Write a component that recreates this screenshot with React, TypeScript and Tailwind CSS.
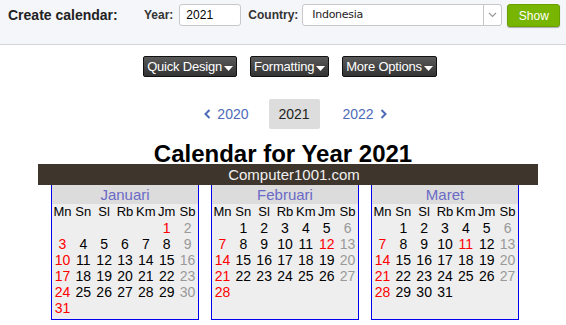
const months = [
  {
    name: "Januari",
    start: 5,
    days: 31,
    red: [1],
  },
  {
    name: "Februari",
    start: 1,
    days: 28,
    red: [12],
  },
  {
    name: "Maret",
    start: 1,
    days: 31,
    red: [11],
  },
];

const dayNames = ["Mn", "Sn", "Sl", "Rb", "Km", "Jm", "Sb"];

const Caret = () => (
  <svg width="9" height="5" viewBox="0 0 9 5" className="ml-[2px] mt-[3px]">
    <path d="M0 0 L9 0 L4.5 5 Z" fill="#ffffff" />
  </svg>
);

const DarkButton = ({ label }: { label: string }) => (
  <button className="flex items-center h-[21px] px-[3px] rounded-[2px] border border-[#111] bg-gradient-to-b from-[#5a5a5a] to-[#333] text-[13px] text-white leading-none tracking-[-0.2px]">
    {label}
    <Caret />
  </button>
);

const Chevron = ({ dir }: { dir: "l" | "r" }) => (
  <svg width="7" height="10" viewBox="0 0 7 10">
    <path
      d={dir === "l" ? "M5.5 1 L1.5 5 L5.5 9" : "M1.5 1 L5.5 5 L1.5 9"}
      fill="none"
      stroke="#4d6bb8"
      strokeWidth="2"
    />
  </svg>
);

const Month = ({ m }: { m: (typeof months)[number] }) => {
  const cells: (number | null)[] = [];
  for (let i = 0; i < m.start; i++) cells.push(null);
  for (let d = 1; d <= m.days; d++) cells.push(d);
  return (
    <div className="w-[148px] border-x border-b border-[#0000ee] bg-[#eeeeee]">
      <div className="h-[19px] bg-[#dcdcdc] text-center text-[15px] leading-[19px] text-[#6a6ac6]">
        {m.name}
      </div>
      <div className="grid grid-cols-7 text-center text-[14px] leading-[16px] pb-[3px]">
        {dayNames.map((d) => (
          <div key={d} className="text-black text-[13px]">
            {d}
          </div>
        ))}
        {cells.map((d, i) => {
          const col = i % 7;
          let color = "text-black";
          if (d && (col === 0 || m.red.includes(d))) color = "text-[#ff0000]";
          else if (col === 6) color = "text-[#999999]";
          return (
            <div key={i} className={color}>
              {d ?? ""}
            </div>
          );
        })}
      </div>
    </div>
  );
};

export default function App() {
  return (
    <div className="w-[566px] h-[325px] overflow-hidden bg-white font-['Liberation_Sans',Arial,sans-serif]">
      {/* top form */}
      <div className="h-[45px] bg-[#f5f6fa] border-b border-[#d4d4d8] flex items-start pt-[4px] pl-[8px]">
        <div className="w-[113px] text-[14px] font-bold leading-[20px] text-[#222] mt-[1px] whitespace-nowrap">Create calendar:</div>
        <div className="ml-[23px] mt-[3px] text-[12px] font-bold leading-[16px] text-[#333]">Year:</div>
        <div className="ml-[6px] w-[62px] h-[22px] rounded-[3px] border border-[#c8c8c8] bg-white pl-[6px] text-[12px] leading-[20px] text-black">
          2021
        </div>
        <div className="ml-[7px] mt-[3px] text-[12px] font-bold leading-[16px] text-[#333]">Country:</div>
        <div className="ml-[4px] w-[200px] h-[22px] rounded-[3px] border border-[#c8c8c8] bg-white flex">
          <div className="flex-1 pl-[9px] text-[11px] leading-[20px] text-[#222] font-['DejaVu_Sans',Verdana,sans-serif] tracking-[-0.3px]">
            Indonesia
          </div>
          <div className="w-[18px] border-l border-[#c8c8c8] flex items-center justify-center">
            <svg width="9" height="6" viewBox="0 0 9 6">
              <path d="M1 1 L4.5 4.5 L8 1" fill="none" stroke="#999" strokeWidth="1.2" />
            </svg>
          </div>
        </div>
        <button className="ml-[5px] w-[53px] h-[23px] rounded-[3px] bg-[#78b500] border border-[#6a9f00] text-white text-[12px] leading-[20px] shadow-[0_1px_1px_rgba(0,0,0,0.3)]">
          Show
        </button>
      </div>

      {/* option buttons */}
      <div className="flex justify-center gap-[13px] mt-[11px] pl-[14px]">
        <DarkButton label="Quick Design" />
        <DarkButton label="Formatting" />
        <DarkButton label="More Options" />
      </div>

      {/* year nav */}
      <div className="flex items-center justify-center mt-[22px] pl-[25px] text-[14px]">
        <div className="flex items-center gap-[6px] text-[#4d6bb8]">
          <Chevron dir="l" />
          <span>2020</span>
        </div>
        <div className="ml-[20px] w-[51px] h-[30px] rounded-[2px] bg-[#dddddd] flex items-center justify-center text-[#222]">
          2021
        </div>
        <div className="ml-[23px] flex items-center gap-[6px] text-[#4d6bb8]">
          <span>2022</span>
          <Chevron dir="r" />
        </div>
      </div>

      {/* title */}
      <div className="mt-[13px] h-[22px] text-center text-[24px] font-bold leading-[24px] text-black">
        Calendar for Year 2021
      </div>

      <div className="ml-[38px] w-[500px]">
        <div className="h-[21px] bg-[#3e362c] text-center pl-[12px] text-[15px] leading-[21px] text-[#f0f0f0]">
          Computer1001.com
        </div>
        <div className="flex gap-[12px] pl-[13px]">
          {months.map((m) => (
            <Month key={m.name} m={m} />
          ))}
        </div>
      </div>
    </div>
  );
}
